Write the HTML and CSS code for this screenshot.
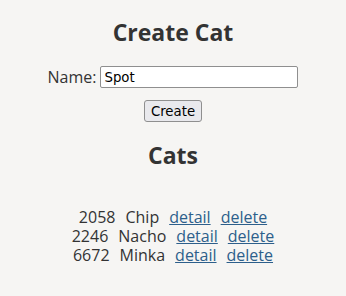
FILE: index.html
```html
<!DOCTYPE html>
<html>
<head>
<meta charset="utf-8">
<link rel="stylesheet" href="styles.css">
</head>
<body>
<div class="app">
  <h2 class="title">Create Cat</h2>
  <form class="form">
    <label class="field">Name: <input class="input" type="text" value="Spot"></label>
    <button class="btn" type="button">Create</button>
  </form>
  <h2 class="title cats">Cats</h2>
  <div class="list">
    <div class="row"><span>2058</span><span>Chip</span><a href="#">detail</a><a href="#">delete</a></div>
    <div class="row"><span>2246</span><span>Nacho</span><a href="#">detail</a><a href="#">delete</a></div>
    <div class="row"><span>6672</span><span>Minka</span><a href="#">detail</a><a href="#">delete</a></div>
  </div>
</div>
</body>
</html>
```

FILE: styles.css
```css
html, body {
  margin: 0;
  padding: 0;
  background: #f6f5f3;
}
body {
  font-family: "Open Sans", "DejaVu Sans", sans-serif;
  color: #333333;
  font-size: 16px;
}
.app {
  display: flex;
  flex-direction: column;
  align-items: center;
  padding-top: 17px;
}
.title {
  margin: 0;
  font-size: 23px;
  font-weight: 700;
  line-height: 30px;
}
.form {
  margin-top: 19px;
  display: flex;
  flex-direction: column;
  align-items: center;
  gap: 12px;
}
.field {
  display: flex;
  align-items: center;
  gap: 4px;
  line-height: 22px;
}
.input {
  width: 198px;
  height: 22px;
  box-sizing: border-box;
  font-family: "DejaVu Sans", sans-serif;
  font-size: 13.3px;
  padding: 1px 3px;
  border: 1px solid #8f8f8f;
  border-radius: 2px;
  background: #fff;
  color: #000;
}
.btn {
  height: 22px;
  font-family: "DejaVu Sans", sans-serif;
  font-size: 13.3px;
  padding: 0 6px;
  border: 1px solid #8f8f8f;
  border-radius: 3px;
  background: #e9e9ed;
  color: #000;
}
.cats {
  margin-top: 18px;
}
.list {
  margin-top: 38px;
  display: flex;
  flex-direction: column;
  align-items: center;
}
.row {
  display: flex;
  gap: 10px;
  line-height: 19px;
}
.row a {
  color: #2d5f8b;
}
```
